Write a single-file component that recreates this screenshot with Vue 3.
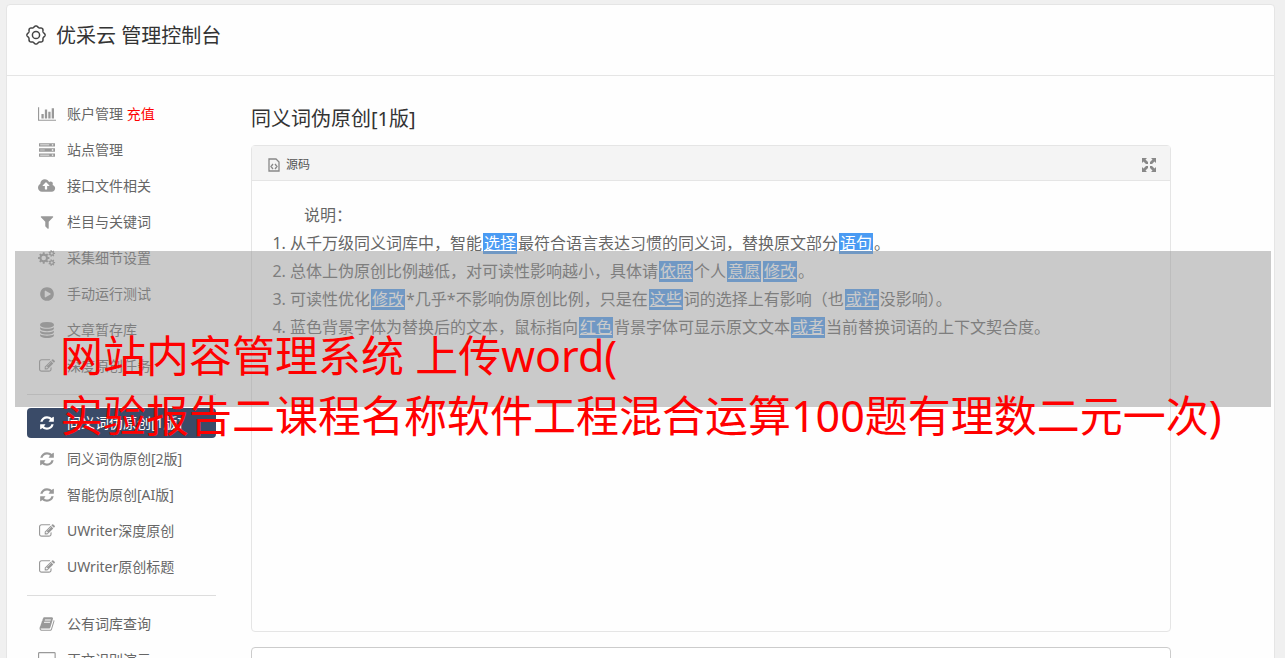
<script setup>
const icons = {
  chart: { w: 2048, d: 'M640 896v512h-256v-512h256zm384-512v1024h-256v-1024h256zm1024 1152v128h-2048v-1536h128v1408h1920zm-640-896v768h-256v-768h256zm384-384v1152h-256v-1152h256z' },
  server: { w: 1792, d: 'M0 128h1792v384h-1792zM128 288v64h1024v-64zM1440 240v160h160v-160zM0 704h1792v384h-1792zM128 864v64h512v-64zM1440 816v160h160v-160zM0 1280h1792v384h-1792zM128 1440v64h1024v-64zM1440 1392v160h160v-160z' },
  cloud: { w: 1920, d: 'M1280 864q0-14-9-23l-352-352q-9-9-23-9t-23 9l-351 351q-10 12-10 24 0 14 9 23t23 9h224v352q0 13 9.5 22.5t22.5 9.5h192q13 0 22.5-9.5t9.5-22.5v-352h224q13 0 22.5-9.5t9.5-22.5zm640 288q0 159-112.5 271.5t-271.5 112.5h-1088q-185 0-316.5-131.5t-131.5-316.5q0-130 70-240t188-165q-2-30-2-43 0-212 150-362t362-150q156 0 285.5 87t188.5 231q71-62 166-62 106 0 181 75t75 181q0 76-41 138 130 31 213.5 135.5t83.5 238.5z' },
  filter: { w: 1792, d: 'M1595 295q17 41-14 70l-493 493v742q0 42-39 59-13 5-25 5-27 0-45-19l-256-256q-19-19-19-45v-486l-493-493q-31-29-14-70 17-39 59-39h1280q42 0 59 39z' },
  play: { w: 1792, d: 'M896 128q209 0 385.5 103t279.5 279.5 103 385.5-103 385.5-279.5 279.5-385.5 103-385.5-103-279.5-279.5-103-385.5 103-385.5 279.5-279.5 385.5-103zm384 823q32-18 32-55t-32-55l-544-320q-31-19-64-1-32 19-32 56v640q0 37 32 56 16 8 32 8 17 0 32-9z' },
  database: { w: 1792, d: 'M896 768q237 0 443-43t325-127v170q0 69-103 128t-280 93.5-385 34.5-385-34.5-280-93.5-103-128v-170q119 84 325 127t443 43zm0 768q237 0 443-43t325-127v170q0 69-103 128t-280 93.5-385 34.5-385-34.5-280-93.5-103-128v-170q119 84 325 127t443 43zm0-384q237 0 443-43t325-127v170q0 69-103 128t-280 93.5-385 34.5-385-34.5-280-93.5-103-128v-170q119 84 325 127t443 43zm0-1152q208 0 385 34.5t280 93.5 103 128v128q0 69-103 128t-280 93.5-385 34.5-385-34.5-280-93.5-103-128v-128q0-69 103-128t280-93.5 385-34.5z' },
  edit: { w: 1792, d: 'M888 1184l116-116-152-152-116 116v56h96v96h56zm440-720q-16-16-33 1l-350 350q-17 17-1 33t33-1l350-350q17-17 1-33zm80 594v190q0 119-84.5 203.5t-203.5 84.5h-832q-119 0-203.5-84.5t-84.5-203.5v-832q0-119 84.5-203.5t203.5-84.5h832q63 0 117 25 15 7 18 23 3 17-9 29l-49 49q-14 14-32 8-23-6-45-6h-832q-66 0-113 47t-47 113v832q0 66 47 113t113 47h832q66 0 113-47t47-113v-126q0-13 9-22l64-64q15-15 35-7t20 29zm-96-738l288 288-672 672h-288v-288zm444 132l-92 92-288-288 92-92q28-28 68-28t68 28l152 152q28 28 28 68t-28 68z' },
  refresh: { w: 1792, d: 'M1639 1056q0 5-1 7-64 268-268 434.5t-478 166.5q-146 0-282.5-55t-243.5-157l-129 129q-19 19-45 19t-45-19-19-45v-448q0-26 19-45t45-19h448q26 0 45 19t19 45-19 45l-137 137q71 66 161 102t187 36q134 0 250-65t186-179q11-17 53-117 8-23 30-23h192q13 0 22.5 9.5t9.5 22.5zm25-800v448q0 26-19 45t-45 19h-448q-26 0-45-19t-19-45 19-45l138-138q-148-137-349-137-134 0-250 65t-186 179q-11 17-53 117-8 23-30 23h-199q-13 0-22.5-9.5t-9.5-22.5v-7q65-268 270-434.5t480-166.5q146 0 284 55.5t245 156.5l130-129q19-19 45-19t45 19 19 45z' },
  book: { w: 1792, d: 'M1703 478q40 57 18 129l-275 906q-19 64-76.5 107.5t-122.5 43.5h-923q-77 0-148.5-53.5t-99.5-131.5q-24-67-2-127 0-4 3-27t4-37q1-8-3-21.5t-3-19.5q2-11 8-21t16.5-23.5 16.5-23.5q23-38 45-91.5t30-91.5q3-10 .5-30t-.5-28q3-11 17-28t17-23q21-36 42-92t25-90q1-9-2.5-32t.5-28q4-13 22-30.5t22-22.5q19-26 42.5-84.5t27.5-96.5q1-8-3-25.5t-2-26.5q2-8 9-18t18-23 17-21q8-12 16.5-30.5t15-35 16-36 19.5-32 26.5-23.5 36-11.5 47.5 5.5l-1 3q38-9 51-9h761q74 0 114 56t18 130l-274 906q-36 119-71.5 153.5t-128.5 34.5h-869q-27 0-38 15-11 16-1 43 24 70 144 70h923q29 0 56-15.5t35-41.5l300-987q7-22 5-57 38 15 59 43zm-1064 2q-4 13 2 22.5t20 9.5h608q13 0 25.5-9.5t16.5-22.5l21-64q4-13-2-22.5t-20-9.5h-608q-13 0-25.5 9.5t-16.5 22.5zm-83 256q-4 13 2 22.5t20 9.5h608q13 0 25.5-9.5t16.5-22.5l21-64q4-13-2-22.5t-20-9.5h-608q-13 0-25.5 9.5t-16.5 22.5z' },
  desktop: { w: 1984, d: 'M160 0h1664q160 0 160 160v1088q0 160-160 160h-1664q-160 0-160-160v-1088q0-160 160-160zM160 128q-32 0-32 32v864q0 32 32 32h1664q32 0 32-32v-864q0-32-32-32zM640 1536h704v128h-704z' },
}

// Closed gear outline: polar steps alternate between root and tooth-tip radii.
function gear(cx, cy, root, tip, teeth) {
  const step = (Math.PI * 2) / teeth
  const pts = []
  for (let i = 0; i < teeth; i++) {
    for (const [f, r] of [[-0.3, root], [-0.2, tip], [0.2, tip], [0.3, root]]) {
      const a = (i + f) * step
      pts.push(`${(cx + r * Math.cos(a)).toFixed(1)} ${(cy + r * Math.sin(a)).toFixed(1)}`)
    }
  }
  return `M${pts.join('L')}Z`
}
function ring(cx, cy, r) {
  return `M${cx - r} ${cy}a${r} ${r} 0 1 0 ${2 * r} 0a${r} ${r} 0 1 0 ${-2 * r} 0Z`
}
icons.cogs = {
  w: 1920,
  d: gear(640, 896, 480, 640, 8) + ring(640, 896, 256) +
    gear(1536, 384, 270, 384, 7) + ring(1536, 384, 128) +
    gear(1536, 1408, 270, 384, 7) + ring(1536, 1408, 128),
}

function wave(c, r, amp, lobes) {
  const pts = []
  for (let i = 0; i < 128; i++) {
    const a = (i / 128) * Math.PI * 2
    const q = r + amp * Math.cos(lobes * a)
    pts.push(`${(c + q * Math.cos(a)).toFixed(2)} ${(c + q * Math.sin(a)).toFixed(2)}`)
  }
  return `M${pts.join('L')}Z`
}
const cogOutline = wave(10, 8.4, 0.7, 8)

const groups = [
  [
    { icon: 'chart', text: '账户管理', extra: '充值' },
    { icon: 'server', text: '站点管理' },
    { icon: 'cloud', text: '接口文件相关' },
    { icon: 'filter', text: '栏目与关键词' },
    { icon: 'cogs', text: '采集细节设置' },
    { icon: 'play', text: '手动运行测试' },
    { icon: 'database', text: '文章暂存库' },
    { icon: 'edit', text: '深度原创任务' },
  ],
  [
    { icon: 'refresh', text: '同义词伪原创[1版]', active: true },
    { icon: 'refresh', text: '同义词伪原创[2版]' },
    { icon: 'refresh', text: '智能伪原创[AI版]' },
    { icon: 'edit', text: 'UWriter深度原创' },
    { icon: 'edit', text: 'UWriter原创标题' },
  ],
  [
    { icon: 'book', text: '公有词库查询' },
    { icon: 'desktop', text: '正文识别演示' },
  ],
]

// Odd entries are the replaced words.
const lines = [
  ['从千万级同义词库中，智能', '选择', '最符合语言表达习惯的同义词，替换原文部分', '语句', '。'],
  ['总体上伪原创比例越低，对可读性影响越小，具体请', '依照', '个人', '意愿', '', '修改', '。'],
  ['可读性优化', '修改', '*几乎*不影响伪原创比例，只是在', '这些', '词的选择上有影响（也', '或许', '没影响）。'],
  ['蓝色背景字体为替换后的文本，鼠标指向', '红色', '背景字体可显示原文文本', '或者', '当前替换词语的上下文契合度。'],
]
</script>

<template>
  <div class="page">
    <div class="card">
      <header class="head">
        <svg class="cog" viewBox="0 0 20 20" aria-hidden="true">
          <path :d="cogOutline" />
          <circle cx="10" cy="10" r="3.6" />
        </svg>
        <h1>优采云 管理控制台</h1>
      </header>
      <div class="body">
        <nav class="side">
          <template v-for="(group, g) in groups" :key="g">
            <hr v-if="g" />
            <a v-for="item in group" :key="item.text" href="#" class="item" :class="{ active: item.active }">
              <span class="ico">
                <svg :viewBox="`0 0 ${icons[item.icon].w} 1792`" aria-hidden="true">
                  <path fill-rule="evenodd" :d="icons[item.icon].d" />
                </svg>
              </span>
              <span>{{ item.text }} <em v-if="item.extra">{{ item.extra }}</em></span>
            </a>
          </template>
        </nav>
        <main class="main">
          <h2>同义词伪原创[1版]</h2>
          <section class="panel">
            <div class="bar">
              <button type="button" class="tool">
                <svg class="file" viewBox="0 0 12 14" aria-hidden="true">
                  <path d="M1 1h7l3 3v9H1zM5 6L3 8.500l2 2.500M7 6l2 2.500L7 11" />
                </svg>
                源码
              </button>
              <button type="button" class="tool" aria-label="全屏">
                <svg class="full" viewBox="0 0 14 14" aria-hidden="true">
                  <path d="M0 0h5L3.500 1.500 6 4v2H4L1.500 3.500 0 5zM14 0v5l-1.500-1.500L10 6H8V4l2.500-2.500L9 0zM0 14V9l1.500 1.500L4 8h2v2l-2.500 2.500L5 14zM14 14H9l1.500-1.500L8 10V8h2l2.500 2.500L14 9z" />
                </svg>
              </button>
            </div>
            <div class="doc">
              <p>说明：</p>
              <ol>
                <li v-for="(line, n) in lines" :key="n"><template v-for="(part, i) in line" :key="i"><mark v-if="i % 2">{{ part }}</mark><template v-else>{{ part }}</template></template></li>
              </ol>
            </div>
          </section>
          <textarea class="input" aria-label="原文"></textarea>
        </main>
      </div>
    </div>
    <div class="banner">
      <div>网站内容管理系统 上传word(</div>
      <div>实验报告二课程名称软件工程混合运算100题有理数二元一次)</div>
    </div>
  </div>
</template>

<style>
body {
  margin: 0;
}
</style>

<style scoped>
.page {
  position: relative;
  box-sizing: border-box;
  height: 100vh;
  overflow: hidden;
  padding: 4px 10px 0 6px;
  background: #f0f0f0;
  font-family: "Noto Sans", "Noto Sans CJK SC", sans-serif;
  font-size: 14px;
  color: #666;
}
.card {
  min-height: 100vh;
  background: #fefefe;
  border: 1px solid #e5e5e5;
  border-radius: 4px;
}
.head {
  display: flex;
  align-items: center;
  gap: 10px;
  height: 62px;
  padding: 0 19px 8px;
  border-bottom: 1px solid #e5e5e5;
}
.cog {
  width: 20px;
  height: 20px;
  margin-bottom: 2px;
  fill: none;
  stroke: #444;
  stroke-width: 1.5;
}
h1,
h2 {
  margin: 0;
  font-size: 20px;
  font-weight: 400;
  line-height: 28px;
  color: #333;
}
.body {
  display: grid;
  grid-template-columns: 189px minmax(0, 1fr);
  gap: 35px;
  padding: 23px 103px 0 20px;
}
.side {
  display: flex;
  flex-direction: column;
  gap: 6px;
}
.side hr {
  width: 100%;
  height: 1px;
  margin: 7px 0;
  border: 0;
  background: #ddd;
}
.item {
  display: flex;
  align-items: center;
  gap: 10px;
  height: 30px;
  padding-left: 10px;
  border-radius: 4px;
  color: #666;
  line-height: 20px;
  text-decoration: none;
  white-space: nowrap;
}
.item em {
  font-style: normal;
  color: #f00;
}
.ico {
  display: flex;
  justify-content: center;
  width: 20px;
}
.ico svg {
  height: 16px;
  fill: #999;
}
.active {
  background: #3a4b68;
  color: #fff;
}
.active .ico svg {
  fill: #fff;
}
.main {
  padding-top: 6px;
}
.panel {
  box-sizing: border-box;
  min-height: 487px;
  margin: 12px 0 15px;
  border: 1px solid #e5e5e5;
  border-radius: 4px;
}
.bar {
  box-sizing: border-box;
  display: flex;
  justify-content: space-between;
  align-items: center;
  height: 35px;
  padding: 3px 14px 0 16px;
  background: #f4f4f4;
  border-bottom: 1px solid #e5e5e5;
}
.tool {
  display: flex;
  align-items: center;
  gap: 6px;
  padding: 0;
  border: 0;
  background: none;
  font-family: inherit;
  font-size: 12px;
  line-height: 18px;
  color: #555;
}
.file {
  width: 12px;
  height: 14px;
  fill: none;
  stroke: #888;
  stroke-width: 1.3;
}
.full {
  width: 14px;
  height: 14px;
  fill: #888;
}
.doc {
  padding: 20px;
  font-size: 16px;
  line-height: 28px;
}
.doc p {
  margin: 0;
  text-indent: 32px;
}
.doc ol {
  margin: 0;
  padding-left: 18px;
}
mark {
  margin: 0 1px;
  padding: 0 1px;
  background: linear-gradient(#4a9bf3, #4a9bf3) center / 100% 21px no-repeat;
  color: #fff;
  text-decoration: underline;
}
.input {
  display: block;
  box-sizing: border-box;
  width: 100%;
  height: 120px;
  border: 1px solid #ccc;
  border-radius: 4px;
  background: #fff;
  resize: none;
}
.banner {
  position: absolute;
  top: 251px;
  left: 15px;
  right: 14px;
  box-sizing: border-box;
  height: 156px;
  padding: 75px 0 0 45px;
  background: rgba(150, 150, 150, 0.5);
  color: #f00;
  font-size: 43px;
  line-height: 60px;
  white-space: nowrap;
}
</style>
